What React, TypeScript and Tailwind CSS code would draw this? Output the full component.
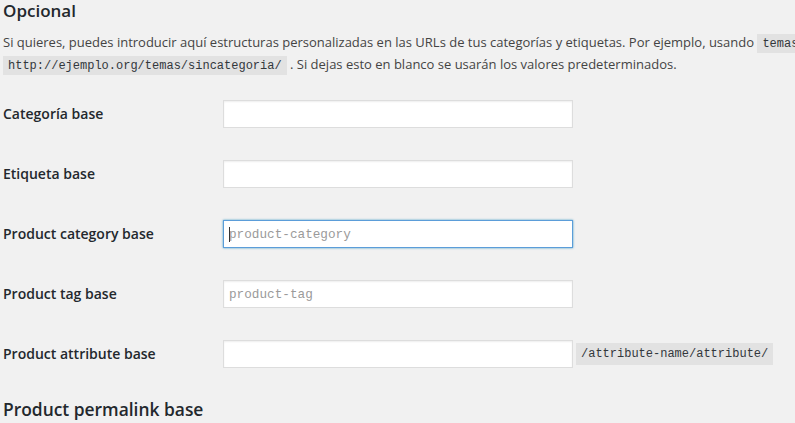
const rows = [
  { label: "Categoría base", placeholder: "" },
  { label: "Etiqueta base", placeholder: "" },
  { label: "Product category base", placeholder: "product-category", focused: true },
  { label: "Product tag base", placeholder: "product-tag" },
  { label: "Product attribute base", placeholder: "", suffix: "/attribute-name/attribute/" },
];

function Code({ children }: { children: React.ReactNode }) {
  return (
    <code className="bg-[#e2e2e2] px-[5px] pt-[3px] pb-[2px] text-[12px] text-[#32373c] font-['Liberation_Mono',monospace]">
      {children}
    </code>
  );
}

export default function App() {
  return (
    <div className="w-[795px] h-[423px] overflow-hidden bg-[#f1f1f1] font-['Open_Sans',sans-serif] text-[#444]">
      <div className="w-[1200px] pl-[3px]">
        <h3 className="text-[17px] leading-[22px] font-semibold text-[#23282d]">Opcional</h3>
        <p className="mt-[11px] text-[13px] leading-[19.5px] whitespace-nowrap">
          Si quieres, puedes introducir aquí estructuras personalizadas en las URLs de tus categorías y
          etiquetas. Por ejemplo, usando <Code>temas</Code> como base de categorías harías que los enlaces a las
          categorías fueran como
          <br />
          <Code>http://ejemplo.org/temas/sincategoria/</Code> . Si dejas esto en blanco se usarán los valores
          predeterminados.
        </p>

        <div className="mt-[8px] flex flex-col">
          {rows.map((r) => (
            <div key={r.label} className="h-[60px] flex items-center">
              <label className="w-[220px] text-[14px] font-semibold text-[#23282d] -mt-px">{r.label}</label>
              <div className="relative">
                <input
                  readOnly
                  placeholder={r.placeholder}
                  className={
                    r.focused
                      ? "w-[350px] h-[28px] bg-white border border-[#5b9dd9] shadow-[0_0_2px_rgba(30,140,190,0.8)] px-[5px] text-[12.7px] font-['Liberation_Mono',monospace] outline-none placeholder:text-[#9a9a9a]"
                      : "w-[350px] h-[28px] bg-white border border-[#ddd] shadow-[inset_0_1px_2px_rgba(0,0,0,0.07)] px-[5px] text-[12.7px] font-['Liberation_Mono',monospace] outline-none placeholder:text-[#9a9a9a]"
                  }
                />
                {r.focused && <span className="absolute left-[6px] top-[7px] w-px h-[15px] bg-[#333]" />}
              </div>
              {r.suffix && (
                <span className="ml-[3px] bg-[#e2e2e2] px-[5px] py-[2px] text-[12px] leading-[18px] text-[#32373c] font-['Liberation_Mono',monospace]">
                  {r.suffix}
                </span>
              )}
            </div>
          ))}
        </div>

        <h3 className="mt-[14px] text-[17.4px] leading-[22px] font-semibold text-[#23282d]">Product permalink base</h3>
      </div>
    </div>
  );
}
